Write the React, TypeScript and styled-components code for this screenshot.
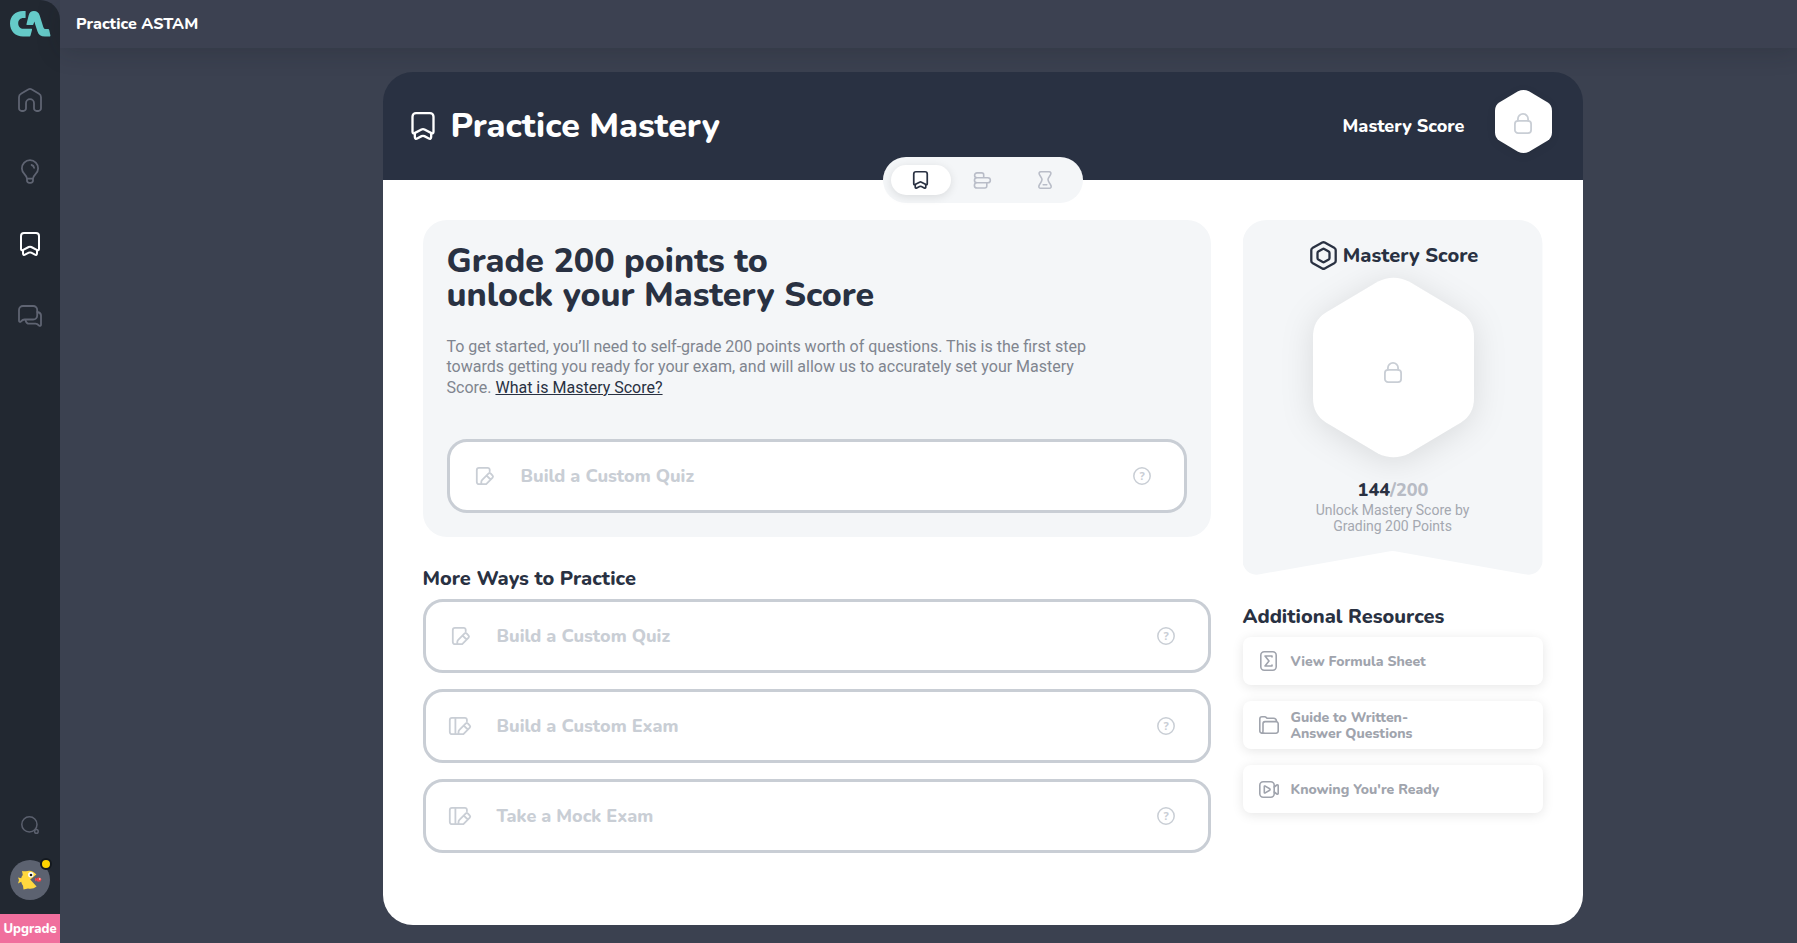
import React from 'react';
import styled, { createGlobalStyle } from 'styled-components';

const heading = `'Nunito', 'Lato', sans-serif`;
const ink = '#293142';
const muted = '#c9ced5';

const GlobalStyle = createGlobalStyle`
  *, *::before, *::after { box-sizing: border-box; }
  body { margin: 0; background: #3b4150; font-family: 'Roboto', sans-serif; overflow: hidden; }
  h1, h2, h3, p { margin: 0; }
  svg { display: block; flex: none; overflow: visible; }
`;

const Page = styled.div`
  display: flex;
  width: 1797px;
  height: 943px;
  background: #3b4150;
`;

const Sidebar = styled.nav`
  display: flex;
  flex-direction: column;
  align-items: center;
  flex: none;
  width: 60px;
  height: 943px;
  padding-top: 10px;
  background: #222831;
  border-top-right-radius: 20px;
`;

const NavList = styled.div`
  display: flex;
  flex-direction: column;
  gap: 48px;
  margin-top: 51px;
`;

const NavItem = styled.a<{ $active?: boolean }>`
  display: flex;
  align-items: center;
  justify-content: center;
  width: 24px;
  height: 24px;
  color: ${p => (p.$active ? '#fff' : '#5f6472')};
`;

const SidebarFoot = styled.div`
  display: flex;
  flex-direction: column;
  align-items: center;
  width: 100%;
  margin-top: auto;
  color: #5b606e;
`;

const Avatar = styled.div`
  position: relative;
  display: flex;
  align-items: center;
  justify-content: center;
  width: 40px;
  height: 40px;
  margin: 26px 0 14px;
  border-radius: 50%;
  background: #5c6270;
`;

const Badge = styled.span`
  position: absolute;
  top: -2px;
  right: -2px;
  width: 12px;
  height: 12px;
  border: 2px solid #14191f;
  border-radius: 50%;
  background: #ffd400;
`;

const Upgrade = styled.a`
  width: 100%;
  height: 29px;
  padding-top: 1px;
  background: #f06f9d;
  color: #fff;
  font: 800 13px/29px ${heading};
  text-align: center;
`;

const Main = styled.div`
  flex: 1;
  display: flex;
  flex-direction: column;
`;

const TopBar = styled.header`
  flex: none;
  height: 48px;
  padding-left: 16px;
  background: #3c4151;
  box-shadow: 0 4px 24px rgba(20, 25, 30, 0.2);
  color: #fff;
  font: 800 16px/48px ${heading};
`;

const Card = styled.main`
  width: 1200px;
  height: 853px;
  margin: 24px 0 0 322.5px;
`;

const CardHeader = styled.div`
  position: relative;
  display: flex;
  align-items: center;
  height: 108px;
  padding: 0 31px 0 28px;
  border-radius: 30px 30px 0 0;
  background: ${ink};
  color: #fff;
`;

const PageTitle = styled.h1`
  margin-left: 16px;
  font: 800 34px/34px ${heading};
`;

const HeaderScore = styled.div`
  margin-left: auto;
  font: 800 18px/24px ${heading};
`;

const HexBox = styled.div<{ $w: number; $h: number; $drop: number; $shadow: string }>`
  position: relative;
  display: flex;
  align-items: center;
  justify-content: center;
  width: ${p => p.$w}px;
  height: ${p => p.$h}px;
  color: ${muted};
  & > svg:first-child { position: absolute; inset: 0; filter: ${p => p.$shadow}; }
  & > svg:last-child { position: relative; margin-top: ${p => p.$drop}px; }
`;

const HeaderHex = styled.div`
  margin: -9px 0 0 30px;
`;

const PanelHex = styled.div`
  margin-left: 1px;
`;

const Tabs = styled.div`
  position: absolute;
  left: 500px;
  top: 85px;
  display: flex;
  align-items: center;
  gap: 2px;
  width: 200px;
  height: 46px;
  padding: 0 8px;
  border-radius: 23px;
  background: #f4f6f8;
`;

const Tab = styled.button<{ $active?: boolean }>`
  display: flex;
  align-items: center;
  justify-content: center;
  width: 60px;
  height: 30px;
  padding: 0;
  border: 0;
  border-radius: 15px;
  background: ${p => (p.$active ? '#fff' : 'transparent')};
  box-shadow: ${p => (p.$active ? '0 2px 10px rgba(0,0,0,.11)' : 'none')};
  color: ${p => (p.$active ? ink : '#b9bdc8')};
`;

const Body = styled.div`
  display: flex;
  gap: 32px;
  height: 745px;
  padding: 40px;
  border-radius: 0 0 30px 30px;
  background: #fff;
`;

const Left = styled.section`
  width: 788px;
`;

const Right = styled.aside`
  width: 300px;
`;

const Intro = styled.div`
  height: 317px;
  padding: 24px;
  border-radius: 24px;
  background: #f4f6f8;
`;

const IntroTitle = styled.h2`
  color: ${ink};
  font: 800 34px/34px ${heading};
`;

const IntroText = styled.p`
  height: 60px;
  margin: 25px 0 42px;
  color: #80858f;
  font-size: 16px;
  line-height: 20.4px;
  white-space: nowrap;
  a { color: ${ink}; text-decoration: underline; }
`;

const SectionTitle = styled.h3`
  margin: 32px 0 10px;
  color: ${ink};
  font: 800 20px/20px ${heading};
`;

const OptionList = styled.div`
  display: flex;
  flex-direction: column;
  gap: 16px;
`;

const Option = styled.div`
  display: flex;
  align-items: center;
  height: 74px;
  padding: 0 32.5px 0 20.5px;
  border: 3px solid ${muted};
  border-radius: 20px;
  background: #fff;
  color: ${muted};
`;

const OptionIcon = styled.span<{ $shift: number }>`
  display: flex;
  justify-content: center;
  width: 28px;
  padding-left: ${p => p.$shift}px;
`;

const OptionLabel = styled.span`
  flex: 1;
  margin-left: 22.5px;
  font: 800 18px/24px ${heading};
`;

const HelpMark = styled.text`
  fill: currentColor;
  stroke: none;
  font: 700 11px 'Noto Sans', sans-serif;
`;

const ScorePanel = styled.div`
  display: flex;
  flex-direction: column;
  align-items: center;
  height: 355px;
  padding-top: 21px;
  background: #f4f6f8;
  clip-path: path('M24 0H276A24 24 0 0 1 300 24V340.5A14 14 0 0 1 284 354.5L152.5 331.2Q150 330.8 147.5 331.2L16 354.5A14 14 0 0 1 0 340.5V24A24 24 0 0 1 24 0Z');
`;

const ScoreTitle = styled.h3`
  display: flex;
  align-items: center;
  gap: 6px;
  height: 29px;
  margin: 0 0 8px 3px;
  color: ${ink};
  font: 800 20px/29px ${heading};
`;

const Points = styled.div`
  margin: 23px 0 0 1px;
  color: #b8bcc5;
  font: 800 18px/20px ${heading};
  b { color: ${ink}; font-weight: 800; }
`;

const PointsNote = styled.p`
  margin-top: 2px;
  color: #a4a8b0;
  font-size: 14px;
  line-height: 16px;
  text-align: center;
`;

const Resource = styled.a`
  display: flex;
  align-items: center;
  gap: 12px;
  height: 48px;
  padding-left: 16px;
  border-radius: 8px;
  background: #fff;
  box-shadow: 0 2px 12px rgba(0, 0, 0, 0.1);
  color: #a0a4ad;
  font: 800 14px/16px ${heading};
`;

const ResourceLabel = styled.span`
  padding-top: 1px;
`;

const ResourceIcon = styled.span`
  display: flex;
  justify-content: center;
  width: 20px;
`;

type IconProps = { w: number; h: number; box: string; sw?: number; children: React.ReactNode };
const Icon = ({ w, h, box, sw = 1.8, children }: IconProps) => (
  <svg width={w} height={h} viewBox={box} fill="none" stroke="currentColor" strokeWidth={sw} strokeLinecap="round" strokeLinejoin="round">
    {children}
  </svg>
);

const Bookmark = ({ w = 20, h = 24, sw = 2 }) => (
  <Icon w={w} h={h} box="0 0 20 24" sw={sw}>
    <path d="M4 1H16A3 3 0 0 1 19 4V17C19 18.2 18.2 18.6 17.2 18.1L11.3 15Q10 14.3 8.7 15L2.8 18.1C1.8 18.6 1 18.2 1 17V4A3 3 0 0 1 4 1Z" />
    <path d="M3 18.3V21.5C3 22.8 4 23.3 5 22.7L8.8 20.7Q10 20.1 11.2 20.7L15 22.7C16 23.3 17 22.8 17 21.5V18.3" />
  </Icon>
);

const Home = () => (
  <Icon w={24} h={24} box="0 0 24 24">
    <path d="M1 9.2C1 7.6 1.7 6.5 3 5.8L10.6 1.3Q12 .6 13.4 1.3L21 5.8C22.3 6.5 23 7.6 23 9.2V20.3A2.7 2.7 0 0 1 20.3 23H18.7A2.7 2.7 0 0 1 16 20.3V15.2A4 4 0 0 0 8 15.2V20.3A2.7 2.7 0 0 1 5.3 23H3.7A2.7 2.7 0 0 1 1 20.3Z" />
  </Icon>
);

const Bulb = () => (
  <Icon w={18} h={24} box="0 0 18 24">
    <path d="M6 18.6C5.6 16.6 4.8 15.6 3.5 14.2A8.1 8.1 0 1 1 14.5 14.2C13.2 15.6 12.4 16.6 12 18.6ZM6 18.6V20.5A2.3 2.3 0 0 0 8.3 22.9H9.7A2.3 2.3 0 0 0 12 20.5V18.6M10.6 5C12 5.3 12.9 6.4 13.1 7.9" />
  </Icon>
);

const Chat = () => (
  <Icon w={24} h={22} box="0 0 24 22">
    <path d="M5 1H15.2A4 4 0 0 1 19.2 5V10.5A4 4 0 0 1 15.2 14.5H6.5C5 14.5 4 15.2 3 16.4C2.2 17.3 1 17 1 15.8V5A4 4 0 0 1 5 1Z" />
    <path d="M7.5 14.8C7.8 17.4 9.2 18.7 11.5 18.7H17.5C19 18.7 20 19.5 21 20.5C21.9 21.3 23 21 23 19.8V10.5C23 8.7 22 7.5 19.3 7" />
  </Icon>
);

const Search = () => (
  <Icon w={18} h={18} box="0 0 18 18" sw={1.5}>
    <circle cx="8.4" cy="8.4" r="7.6" />
    <circle cx="15.4" cy="15.4" r="1.8" />
  </Icon>
);

const Logo = () => (
  <svg width="41" height="27" viewBox="0 0 41 27" fill="#65cac8">
    <path d="M15.6 1V7.4C15.6 7.9 15.3 8.1 14.8 8.1H13.4C10.3 8.1 8.2 10.2 8.2 13.2C8.2 16.4 10.3 18.8 13.5 18.8H21C21.9 18.8 22.2 19.2 22 20L20.6 25.3C20.4 26.1 20 26.5 19.2 26.5H13C5.5 26.5 0 21 0 13.4C0 6.2 5.3 1 13 1Z" />
    <path d="M16.5 14L18.7 5.2C19.3 2.6 21.2 1 23.9 1C27 1 28.8 2.6 29.7 5.4L33.4 17.2C33.9 18.6 34.5 19 36 19H37.8C38.6 19 39 19.3 39.2 20L40.4 25.2C40.6 26.1 40.2 26.5 39.3 26.5H35C30.8 26.5 28.6 24.8 27.5 21.4L25.2 14.5L24.4 11.6L23.4 14.2C23.1 14.9 22.7 15.1 22 15.1H17.4C16.6 15.1 16.3 14.8 16.5 14Z" />
  </svg>
);

const Fish = () => (
  <svg width="24" height="20" viewBox="0 0 24 20">
    <path fill="#ffd83f" d="M4 1Q6 1.5 8 1.2Q14-.8 18.4 4.6L12.2 9.4L18.6 16.5Q15 19.6 10 18.6L5.5 19.4L5 15.8Q3.6 14 3.2 11.8L0 13.5L1 10L0 7.5L3.2 8.3Q3.5 6.5 4.8 5Z" />
    <circle cx="12.8" cy="4.8" r="2.7" fill="#fff" />
    <circle cx="13" cy="5" r="1.3" fill="#1b1f26" />
    <ellipse cx="20.8" cy="9.6" rx="2.6" ry="2.2" fill="#ee4545" />
    <path fill="#ee4545" d="M17 7.8L19.4 9.4L17 11.6Z" />
    <circle cx="21.8" cy="9" r=".8" fill="#fff" />
  </svg>
);

const Stack = () => (
  <Icon w={17} h={17} box="0 0 17 17" sw={1.6}>
    <path d="M3 .9H7.7A2 2 0 0 1 9.7 2.9V5.7M3 .9A2.2 2.2 0 0 0 3 5.7M3 5.7H13.8A2.4 2.4 0 0 1 13.8 10.8H3A2.5 2.5 0 0 1 3 5.7ZM3 10.8A2.5 2.5 0 0 0 3 16H10.8A2 2 0 0 0 12.8 14V10.8" />
  </Icon>
);

const Hourglass = () => (
  <Icon w={14} h={18} box="0 0 14 18" sw={1.6}>
    <path d="M2.8.8H11.2C12.8.8 13.2 2 12.7 3.3C12 5.3 10 6.3 10 8.6C10 11.4 12.3 12 13.1 15C13.4 16.4 12.8 17.2 11.4 17.2H2.6C1.2 17.2.6 16.4.9 15C1.7 12 4 11.4 4 8.6C4 6.3 2 5.3 1.3 3.3C.8 2 1.2.8 2.8.8ZM5.2 13.7H8.8" />
  </Icon>
);

const Lock = () => (
  <Icon w={18} h={21} box="0 0 18 21">
    <rect x=".9" y="7.9" width="16.2" height="12.2" rx="3.2" />
    <path d="M3.9 7.7V6A5.1 5.1 0 0 1 14.1 6V7.7" />
  </Icon>
);

const QuizIcon = () => (
  <Icon w={18} h={18} box="0 0 18 18">
    <path d="M13.7 4.3V2.8A2 2 0 0 0 11.7.8H3A2.2 2.2 0 0 0 .8 3V15A2.2 2.2 0 0 0 3 17.2H10.2L16.6 10.7Q17.5 9.6 16.6 8.6L14.8 6.6Q13.6 5.5 12.4 6.6L6.2 12.8Q5.3 13.7 5.3 15V17.2M10.6 8.6L14.6 12.5" />
  </Icon>
);

const ExamIcon = () => (
  <Icon w={22} h={18} box="0 0 22 18">
    <path d="M17.9 4.3V2.8A2 2 0 0 0 15.9.8H3A2.2 2.2 0 0 0 .8 3V15A2.2 2.2 0 0 0 3 17.2H14.4L20.8 10.7Q21.7 9.6 20.8 8.6L19 6.6Q17.8 5.5 16.6 6.6L10.4 12.8Q9.5 13.7 9.5 15V17.2M14.8 8.6L18.8 12.5M6.4 1V17" />
  </Icon>
);

const Help = () => (
  <Icon w={18} h={18} box="0 0 18 18" sw={1.5}>
    <circle cx="9" cy="9" r="8.2" />
    <HelpMark x="9" y="13" textAnchor="middle">?</HelpMark>
  </Icon>
);

const ScoreMark = () => (
  <Icon w={27} h={29} box="0 0 27 29" sw={2.3}>
    <path d="M12.3 1.6Q13.5 .9 14.7 1.6L24.6 7.1Q25.7 7.8 25.7 9V20Q25.7 21.2 24.6 21.9L14.7 27.4Q13.5 28.1 12.3 27.4L2.4 21.9Q1.3 21.2 1.3 20V9Q1.3 7.8 2.4 7.1Z" />
    <path d="M12.7 8Q13.5 7.5 14.3 8L18.7 10.5Q19.5 11 19.5 12V17Q19.5 18 18.7 18.5L14.3 21Q13.5 21.5 12.7 21L8.3 18.5Q7.5 18 7.5 17V12Q7.5 11 8.3 10.5Z" />
  </Icon>
);

const Sheet = () => (
  <Icon w={17} h={20} box="0 0 17 20" sw={1.6}>
    <rect x=".8" y=".8" width="15.4" height="18.4" rx="3.4" />
    <path d="M12 6V5H5L9 10L5 15H12V14" />
  </Icon>
);

const Folder = () => (
  <Icon w={20} h={18} box="0 0 20 18" sw={1.6}>
    <path d="M5 17.2H3A2.2 2.2 0 0 1 .8 15V3A2.2 2.2 0 0 1 3 .8H5.6C6.4.8 6.8 1 7.4 1.6L8 2.2H14.5C16.3 2.2 17.3 3.2 17.5 5.2" />
    <path d="M6 5.6H17A2.2 2.2 0 0 1 19.2 7.8V15A2.2 2.2 0 0 1 17 17.2H3Q4 16.6 4 15V7.8A2.2 2.2 0 0 1 6 5.6Z" />
  </Icon>
);

const Video = () => (
  <Icon w={20} h={17} box="0 0 20 17" sw={1.6}>
    <rect x=".8" y=".8" width="14.4" height="15.4" rx="3.4" />
    <path d="M5.3 5.6V11.4Q5.3 12.3 6.2 11.9L10.7 9.2Q11.5 8.5 10.7 7.8L6.2 5.1Q5.3 4.7 5.3 5.6ZM15.2 6L17.8 4Q19.2 3.4 19.2 4.8V12.2Q19.2 13.6 17.8 13L15.2 11" />
  </Icon>
);

type HexProps = { w: number; h: number; drop: number; shadow: string };
const Hexagon = ({ w, h, drop, shadow }: HexProps) => (
  <HexBox $w={w} $h={h} $drop={drop} $shadow={shadow}>
    <svg width={w} height={h} viewBox="0 0 161 179" fill="#fff" preserveAspectRatio="none">
      <path d="M65 3.6Q80.5-4 96 3.6L148 34.6Q161 42.5 161 59V120Q161 136.5 148 144.4L96 175.4Q80.5 183 65 175.4L13 144.4Q0 136.5 0 120V59Q0 42.5 13 34.6Z" />
    </svg>
    <Lock />
  </HexBox>
);

const PracticeOption = ({ icon, label, shift = 0 }: { icon: React.ReactNode; label: string; shift?: number }) => (
  <Option>
    <OptionIcon $shift={shift}>{icon}</OptionIcon>
    <OptionLabel>{label}</OptionLabel>
    <Help />
  </Option>
);

export default function App() {
  return (
    <>
      <GlobalStyle />
      <Page>
        <Sidebar>
          <Logo />
          <NavList>
            <NavItem><Home /></NavItem>
            <NavItem><Bulb /></NavItem>
            <NavItem $active><Bookmark /></NavItem>
            <NavItem><Chat /></NavItem>
          </NavList>
          <SidebarFoot>
            <Search />
            <Avatar><Fish /><Badge /></Avatar>
            <Upgrade>Upgrade</Upgrade>
          </SidebarFoot>
        </Sidebar>
        <Main>
          <TopBar>Practice ASTAM</TopBar>
          <Card>
            <CardHeader>
              <Bookmark w={24} h={28} sw={2} />
              <PageTitle>Practice Mastery</PageTitle>
              <HeaderScore>Mastery Score</HeaderScore>
              <HeaderHex>
                <Hexagon w={57} h={63} drop={4} shadow="drop-shadow(0 2px 4px rgba(0,0,0,.06))" />
              </HeaderHex>
              <Tabs>
                <Tab $active><Bookmark w={15} h={18} sw={2.3} /></Tab>
                <Tab><Stack /></Tab>
                <Tab><Hourglass /></Tab>
              </Tabs>
            </CardHeader>
            <Body>
              <Left>
                <Intro>
                  <IntroTitle>Grade 200 points to<br />unlock your Mastery Score</IntroTitle>
                  <IntroText>
                    To get started, you’ll need to self-grade 200 points worth of questions. This is the first step<br />
                    towards getting you ready for your exam, and will allow us to accurately set your Mastery<br />
                    Score. <a>What is Mastery Score?</a>
                  </IntroText>
                  <PracticeOption icon={<QuizIcon />} label="Build a Custom Quiz" shift={2} />
                </Intro>
                <SectionTitle>More Ways to Practice</SectionTitle>
                <OptionList>
                  <PracticeOption icon={<QuizIcon />} label="Build a Custom Quiz" shift={2} />
                  <PracticeOption icon={<ExamIcon />} label="Build a Custom Exam" />
                  <PracticeOption icon={<ExamIcon />} label="Take a Mock Exam" />
                </OptionList>
              </Left>
              <Right>
                <ScorePanel>
                  <ScoreTitle><ScoreMark />Mastery Score</ScoreTitle>
                  <PanelHex>
                    <Hexagon w={161} h={179} drop={9} shadow="drop-shadow(0 4px 16px rgba(0,0,0,.11))" />
                  </PanelHex>
                  <Points><b>144</b>/200</Points>
                  <PointsNote>Unlock Mastery Score by<br />Grading 200 Points</PointsNote>
                </ScorePanel>
                <SectionTitle>Additional Resources</SectionTitle>
                <OptionList>
                  <Resource><ResourceIcon><Sheet /></ResourceIcon><ResourceLabel>View Formula Sheet</ResourceLabel></Resource>
                  <Resource><ResourceIcon><Folder /></ResourceIcon><ResourceLabel>Guide to Written-<br />Answer Questions</ResourceLabel></Resource>
                  <Resource><ResourceIcon><Video /></ResourceIcon><ResourceLabel>Knowing You're Ready</ResourceLabel></Resource>
                </OptionList>
              </Right>
            </Body>
          </Card>
        </Main>
      </Page>
    </>
  );
}
